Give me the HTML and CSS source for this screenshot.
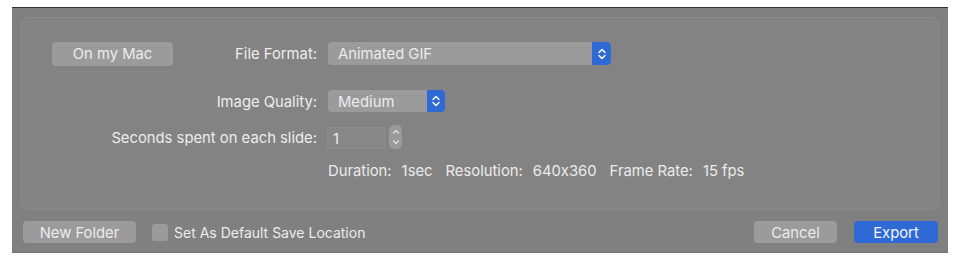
FILE: index.html
```html
<!DOCTYPE html>
<html>
<head>
<meta charset="utf-8">
<link rel="stylesheet" href="styles.css">
</head>
<body>
<div class="panel">
  <div class="box">
    <div class="row row-format">
      <div class="label-col">
        <button class="btn btn-gray btn-mac">On my Mac</button>
        <span class="label">File Format:</span>
      </div>
      <div class="popup popup-format">
        <span class="popup-text">Animated GIF</span>
        <span class="popup-arrows">
          <svg width="10" height="14" viewBox="0 0 10 14"><path d="M2 5.5 L5 2.5 L8 5.5 M2 8.5 L5 11.5 L8 8.5" fill="none" stroke="#fff" stroke-width="1.4" stroke-linecap="round" stroke-linejoin="round"/></svg>
        </span>
      </div>
    </div>
    <div class="row row-quality">
      <div class="label-col"><span class="label">Image Quality:</span></div>
      <div class="popup popup-quality">
        <span class="popup-text">Medium</span>
        <span class="popup-arrows">
          <svg width="10" height="14" viewBox="0 0 10 14"><path d="M2 5.5 L5 2.5 L8 5.5 M2 8.5 L5 11.5 L8 8.5" fill="none" stroke="#fff" stroke-width="1.4" stroke-linecap="round" stroke-linejoin="round"/></svg>
        </span>
      </div>
    </div>
    <div class="row row-seconds">
      <div class="label-col"><span class="label">Seconds spent on each slide:</span></div>
      <div class="field">1</div>
      <div class="stepper">
        <svg width="8" height="20" viewBox="0 0 8 20"><path d="M1.5 6 L4 3.5 L6.5 6 M1.5 14 L4 16.5 L6.5 14" fill="none" stroke="#e4e4e4" stroke-width="1.2" stroke-linecap="round" stroke-linejoin="round"/></svg>
      </div>
    </div>
    <div class="row row-info">
      <div class="label-col"></div>
      <div class="info">
        <span class="info-item">Duration:</span><span class="info-val">1sec</span>
        <span class="info-item">Resolution:</span><span class="info-val">640x360</span>
        <span class="info-item">Frame Rate:</span><span class="info-val">15 fps</span>
      </div>
    </div>
  </div>
  <div class="footer">
    <button class="btn btn-gray btn-folder">New Folder</button>
    <label class="check"><span class="checkbox"></span><span class="check-text">Set As Default Save Location</span></label>
    <div class="spacer"></div>
    <button class="btn btn-gray btn-cancel">Cancel</button>
    <button class="btn btn-blue btn-export">Export</button>
  </div>
</div>
</body>
</html>
```

FILE: styles.css
```css
* { box-sizing: border-box; }
html, body { margin: 0; padding: 0; background: #ffffff; }
body {
  font-family: "Inter", "Liberation Sans", sans-serif;
  font-size: 14.8px;
  font-feature-settings: "calt" 0;
  color: #ececec;
  padding-top: 7px;
}
.panel {
  margin-left: 12px;
  width: 936px;
  height: 246px;
  background: #808080;
  border-top: 1.5px solid #333333;
  padding: 9px 9px 0 9px;
  box-shadow: inset 0 -1px 0 #747474;
}
.box {
  height: 193px;
  border: 1px solid #8b8b8b;
  border-radius: 7px;
  background: #838383;
  padding-top: 24px;
}
.row { display: flex; align-items: center; }
.label-col {
  width: 295px;
  display: flex;
  align-items: center;
  justify-content: flex-end;
  padding-left: 30px;
  flex-shrink: 0;
  margin-right: 11px;
}
.label { white-space: nowrap; color: #ededed; padding-top: 1px; }
.btn {
  font-family: inherit;
  font-size: 14.8px;
  font-feature-settings: "calt" 0;
  border: none;
  border-radius: 4px;
  color: #ececec;
  height: 22px;
  padding: 1px 0 0 0;
  text-align: center;
}
.btn-gray { background: #9b9b9b; }
.btn-blue { background: #2f69d6; color: #f4f6fb; }
.btn-mac { width: 121px; height: 24px; margin-right: auto; }
.row-format { height: 23px; }
.row-quality { height: 22px; margin-top: 25px; }
.row-seconds { height: 24px; margin-top: 13px; }
.row-info { height: 18px; margin-top: 13px; }
.popup {
  display: flex;
  align-items: stretch;
  background: #9b9b9b;
  border-radius: 4px;
  height: 100%;
  overflow: hidden;
}
.popup-format { width: 283px; }
.popup-quality { width: 117px; }
.popup-text { flex: 1; padding-left: 10px; padding-top: 1px; display: flex; align-items: center; }
.popup-arrows {
  width: 19px;
  background: #2f69d6;
  display: flex;
  align-items: center;
  justify-content: center;
}
.popup-quality .popup-arrows { width: 18px; }
.field {
  width: 58px;
  height: 22px;
  margin-left: -1px;
  margin-top: 2px;
  background: #878787;
  border: 1px solid #8c8c8c;
  padding-left: 5px;
  padding-top: 1px;
  display: flex;
  align-items: center;
}
.stepper {
  width: 13px;
  height: 24px;
  margin-left: 4px;
  background: #9a9a9a;
  border-radius: 5px;
  display: flex;
  align-items: center;
  justify-content: center;
}
.info { display: flex; white-space: nowrap; color: #ececec; }
.info-val { margin-left: 10px; margin-right: 13px; }
.footer {
  display: flex;
  align-items: center;
  height: 22px;
  margin-top: 11px;
  padding-left: 2px;
  padding-right: 1px;
}
.btn-folder { width: 113px; }
.check { display: flex; align-items: center; margin-left: 16px; color: #ececec; }
.check-text { font-size: 14px; padding-top: 1px; }
.checkbox {
  width: 16px;
  height: 17px;
  border-radius: 3px;
  background: #9a9a9a;
  margin-right: 6px;
}
.spacer { flex: 1; }
.btn-cancel { width: 83px; }
.btn-export { width: 84px; margin-left: 17px; }
```
